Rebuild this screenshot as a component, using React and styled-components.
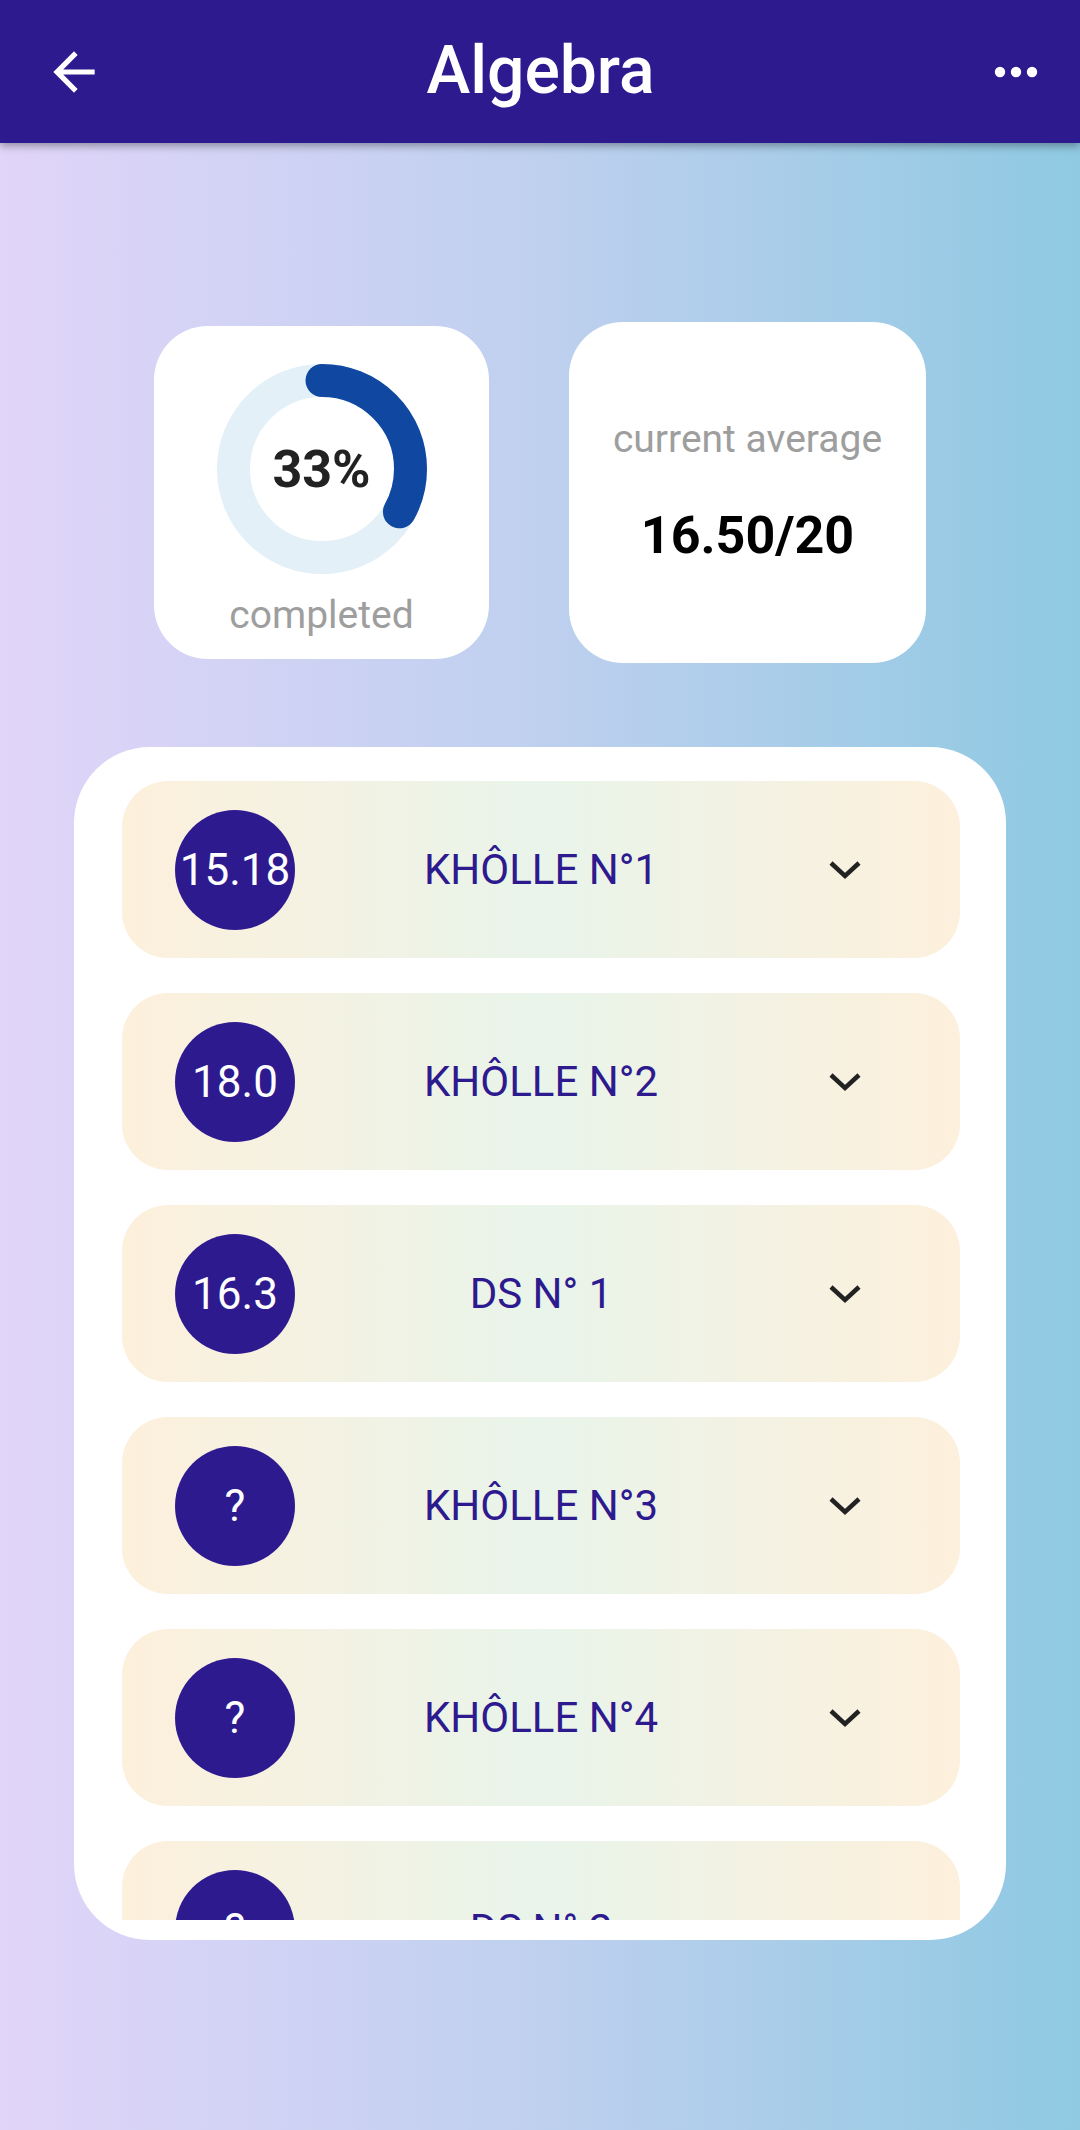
import React from "react";
import styled, { createGlobalStyle } from "styled-components";

const GlobalStyle = createGlobalStyle`
  body {
    margin: 0;
    font-family: Roboto, "Noto Sans", sans-serif;
  }
`;

const Page = styled.div`
  min-height: 2130px;
  background: linear-gradient(90deg, #e1d5f9 0%, #bfd0ef 50%, #8fc9e2 100%);
`;

const Header = styled.header`
  height: 143px;
  background: #2e1a8f;
  box-shadow: 0 3px 8px rgba(0, 0, 0, 0.35);
  display: grid;
  grid-template-columns: 1fr auto 1fr;
  align-items: center;
  padding: 0 42px 0 43px;
  box-sizing: border-box;
  color: white;
`;

const Title = styled.h1`
  margin: 0;
  font-size: 66px;
  font-weight: 500;
  line-height: 1;
  padding-bottom: 2px;
`;

const IconButton = styled.div`
  display: flex;
  justify-content: ${(p) => (p.$right ? "flex-end" : "flex-start")};
  align-items: center;
`;

const Stats = styled.section`
  display: flex;
  justify-content: center;
  align-items: center;
  gap: 80px;
  margin-top: 179px;
`;

const Card = styled.div`
  background: white;
  border-radius: 54px;
  width: ${(p) => p.$w}px;
  height: ${(p) => p.$h}px;
  display: flex;
  flex-direction: column;
  align-items: center;
  box-sizing: border-box;
`;

const AvgCard = styled(Card)`
  justify-content: center;
`;

const DonutWrap = styled.div`
  display: grid;
  margin-top: 38px;
  & > * {
    grid-area: 1 / 1;
  }
`;

const Percent = styled.div`
  align-self: center;
  justify-self: center;
  font-size: 52px;
  font-weight: 700;
  color: #222;
`;

const Caption = styled.div`
  font-size: 39px;
  color: #9e9e9e;
  margin-top: ${(p) => p.$mt || 0}px;
`;

const Average = styled.div`
  font-size: 52px;
  font-weight: 700;
  color: #000;
  margin-top: 43px;
`;

const ListBox = styled.section`
  width: 932px;
  height: 1193px;
  margin: 84px auto 0;
  background: white;
  border-radius: 76px;
  padding: 34px 46px 20px 48px;
  box-sizing: border-box;
`;

const Scroll = styled.div`
  height: 100%;
  overflow: hidden;
  display: flex;
  flex-direction: column;
  gap: 35px;
`;

const Row = styled.div`
  flex: none;
  height: 177px;
  border-radius: 46px;
  background: linear-gradient(90deg, #fdf0dc 0%, #e9f4ea 50%, #fdf0dc 100%);
  display: grid;
  grid-template-columns: 120px 1fr 120px;
  align-items: center;
  padding: 0 53px;
`;

const Score = styled.div`
  width: 120px;
  height: 120px;
  border-radius: 50%;
  background: #2e1a8f;
  color: white;
  display: flex;
  align-items: center;
  justify-content: center;
  font-size: 44px;
`;

const RowTitle = styled.div`
  text-align: center;
  font-size: 42px;
  color: #2e1a8f;
`;

const Chevron = styled.div`
  display: flex;
  justify-content: center;
  padding-right: 4px;
`;

const rows = [
  { score: "15.18", title: "KHÔLLE N°1" },
  { score: "18.0", title: "KHÔLLE N°2" },
  { score: "16.3", title: "DS N° 1" },
  { score: "?", title: "KHÔLLE N°3" },
  { score: "?", title: "KHÔLLE N°4" },
  { score: "?", title: "DS N° 2" },
];

const Donut = ({ value }) => {
  const r = 88.5;
  const c = 2 * Math.PI * r;
  return (
    <svg width="210" height="210" viewBox="0 0 210 210">
      <circle cx="105" cy="105" r={r} fill="none" stroke="#e3f0f7" strokeWidth="33" />
      <circle
        cx="105"
        cy="105"
        r={r}
        fill="none"
        stroke="#0f47a1"
        strokeWidth="33"
        strokeLinecap="round"
        strokeDasharray={`${c * value} ${c}`}
        transform="rotate(-90 105 105)"
      />
    </svg>
  );
};

export default function App() {
  return (
    <Page>
      <GlobalStyle />
      <Header>
        <IconButton>
          <svg width="62" height="62" viewBox="0 0 24 24">
            <path d="M20 11H7.83l5.59-5.59L12 4l-8 8 8 8 1.41-1.41L7.83 13H20v-2z" fill="white" />
          </svg>
        </IconButton>
        <Title>Algebra</Title>
        <IconButton $right>
          <svg width="44" height="12" viewBox="0 0 44 12">
            <circle cx="6" cy="6" r="5.2" fill="white" />
            <circle cx="22" cy="6" r="5.2" fill="white" />
            <circle cx="38" cy="6" r="5.2" fill="white" />
          </svg>
        </IconButton>
      </Header>

      <Stats>
        <Card $w={335} $h={333}>
          <DonutWrap>
            <Donut value={0.33} />
            <Percent>33%</Percent>
          </DonutWrap>
          <Caption $mt={18}>completed</Caption>
        </Card>
        <AvgCard $w={357} $h={341}>
          <Caption $mt={-4}>current average</Caption>
          <Average>16.50/20</Average>
        </AvgCard>
      </Stats>

      <ListBox>
        <Scroll>
          {rows.map((r, i) => (
            <Row key={i}>
              <Score>{r.score}</Score>
              <RowTitle>{r.title}</RowTitle>
              <Chevron>
                <svg width="34" height="22" viewBox="0 0 34 22">
                  <path d="M3 4 L17 17 L31 4" fill="none" stroke="#222" strokeWidth="4.5" />
                </svg>
              </Chevron>
            </Row>
          ))}
        </Scroll>
      </ListBox>
    </Page>
  );
}
